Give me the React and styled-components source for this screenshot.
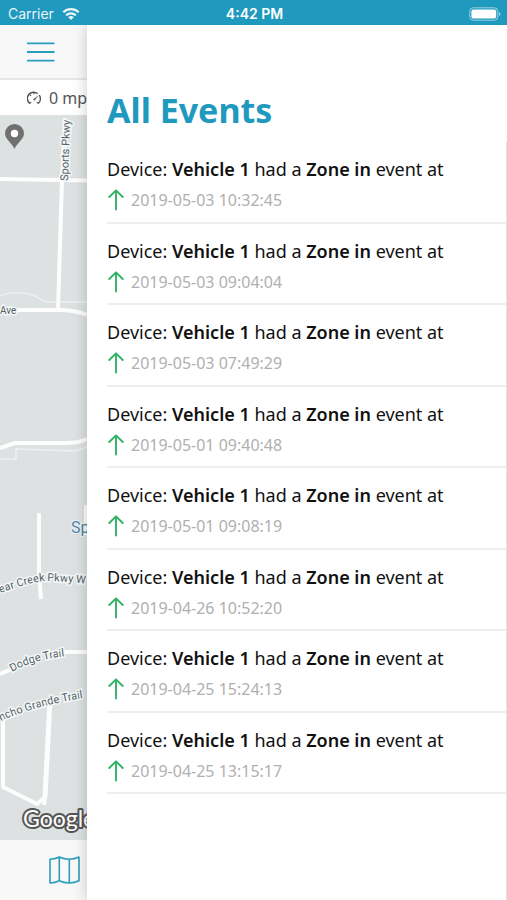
import styled, { createGlobalStyle } from 'styled-components'

const events = [
  { id: 1, device: 'Vehicle 1', type: 'Zone in', time: '2019-05-03 10:32:45' },
  { id: 2, device: 'Vehicle 1', type: 'Zone in', time: '2019-05-03 09:04:04' },
  { id: 3, device: 'Vehicle 1', type: 'Zone in', time: '2019-05-03 07:49:29' },
  { id: 4, device: 'Vehicle 1', type: 'Zone in', time: '2019-05-01 09:40:48' },
  { id: 5, device: 'Vehicle 1', type: 'Zone in', time: '2019-05-01 09:08:19' },
  { id: 6, device: 'Vehicle 1', type: 'Zone in', time: '2019-04-26 10:52:20' },
  { id: 7, device: 'Vehicle 1', type: 'Zone in', time: '2019-04-25 15:24:13' },
  { id: 8, device: 'Vehicle 1', type: 'Zone in', time: '2019-04-25 13:15:17' },
]

const GlobalStyle = createGlobalStyle`
  * {
    box-sizing: border-box;
  }

  body {
    margin: 0;
    background: #fff;
    color: #111;
    font-family: 'Noto Sans', 'Open Sans', sans-serif;
  }
`

const Screen = styled.div`
  display: flex;
  flex-direction: column;
  min-height: 100vh;
`

const StatusBar = styled.header`
  display: grid;
  grid-template-columns: 1fr auto 1fr;
  align-items: center;
  height: 25px;
  padding: 2px 6px 0 8px;
  background: #1f99be;
  color: #fff;
  font-family: Inter, 'Liberation Sans', sans-serif;
  font-size: 14px;
  line-height: 20px;
`

const Carrier = styled.div`
  display: flex;
  align-items: center;
  gap: 8px;
  opacity: 0.9;
`

const Clock = styled.time`
  font-weight: 600;
`

const Battery = styled.svg`
  justify-self: end;
`

const Content = styled.div`
  display: flex;
  flex: 1;
`

const MapPage = styled.section`
  display: flex;
  flex-direction: column;
  flex: 0 0 87px;
  overflow: hidden;
  background: #f8f8f8;
`

const Toolbar = styled.div`
  display: flex;
  align-items: center;
  height: 55px;
  padding-left: 27px;
  border-bottom: 2px solid #e6e6e6;
`

const IconButton = styled.button`
  display: flex;
  padding: 0;
  border: 0;
  background: none;
  color: #2b9dbd;
  cursor: pointer;
`

const SpeedBar = styled.div`
  display: flex;
  align-items: center;
  gap: 8px;
  height: 35px;
  padding-left: 27px;
  background: #fff;
  color: #555;
  font-size: 16px;
  white-space: nowrap;

  svg {
    flex-shrink: 0;
  }
`

const MapView = styled.div`
  flex: 1;
  background: #dde1e2;
  font-family: Roboto, sans-serif;

  svg {
    display: block;
  }
`

const TabBar = styled.nav`
  display: flex;
  align-items: center;
  height: 60px;
  padding-left: 49px;
`

const Drawer = styled.main`
  display: flex;
  flex-direction: column;
  flex: 1;
  min-width: 0;
  padding-left: 20px;
  background: #fff;
  box-shadow: 0 0 14px rgba(0, 0, 0, 0.2);
  clip-path: inset(0 0 0 -20px);
`

const Title = styled.h1`
  margin: 0;
  padding: 61px 0 8px;
  color: #1f99be;
  font-size: 34px;
  font-weight: 700;
  line-height: 48px;
`

const ListArea = styled.div`
  flex: 1;
  border-right: 1px solid #dfe5e7;
`

const EventList = styled.ul`
  display: grid;
  grid-auto-rows: 1fr;
  min-height: 652px;
  margin: 0;
  padding: 0;
  list-style: none;
`

const EventItem = styled.li`
  padding-top: 15px;
  border-bottom: 2px solid #eee;
`

const EventText = styled.p`
  margin: 0;
  font-size: 18px;
  line-height: 24px;

  strong {
    font-weight: 600;
  }
`

const EventMeta = styled.div`
  display: flex;
  align-items: center;
  gap: 6px;
  margin-top: 7px;
  color: #b0b0b0;
  font-size: 16px;
  line-height: 24px;
`

function WifiIcon() {
  return (
    <svg width="18" height="14" viewBox="0 0 18 14" fill="none" stroke="#fff" strokeWidth="2.3">
      <path d="M1.3 5.3a11 11 0 0 1 15.4 0" />
      <path d="M4.2 8.3a7 7 0 0 1 9.6 0" />
      <path d="M9 13 6.2 10.3a4 4 0 0 1 5.6 0Z" fill="#fff" stroke="none" />
    </svg>
  )
}

function BatteryIcon() {
  return (
    <Battery width="32" height="14" viewBox="0 0 32 14">
      <rect x="0.8" y="0.8" width="28" height="12.4" rx="3.4" fill="none" stroke="#fff" strokeOpacity="0.55" />
      <rect x="2.4" y="2.4" width="24.8" height="9.2" rx="2" fill="#fff" />
      <path d="M30 5v4q1.6-.6 1.6-2T30 5Z" fill="#fff" fillOpacity="0.55" />
    </Battery>
  )
}

function MenuIcon() {
  return (
    <svg width="28" height="20" viewBox="0 0 28 20" fill="none" stroke="currentColor" strokeWidth="1.8">
      <path d="M0 1.3h27.5M0 10h27.5M0 18.7h27.5" />
    </svg>
  )
}

function SpeedIcon() {
  return (
    <svg width="14" height="14" viewBox="0 0 14 14" fill="none" stroke="#555" strokeWidth="1.4">
      <path d="M2.7 12.4A6 6 0 0 1 10.6 2.6M12.2 4.2A6 6 0 0 1 11.3 12.4" />
      <path d="m2.4 12.4 1.8-1.1M11.6 12.400 9.800 11.300M7 1.500v1.700M2.700 3.700l1.200 1.200" strokeWidth="1.2" />
      <path d="m6 8.600 5.800-4.500-4.500 5.700Z" fill="#555" stroke="none" />
    </svg>
  )
}

function MapIcon() {
  return (
    <svg width="31" height="28" viewBox="0 0 31 28" fill="none" stroke="currentColor" strokeWidth="1.6" strokeLinejoin="round">
      <path d="M1 3.2q5-.1 9.300-2.200 4.500 2.100 10 2.200 5.200-.1 9.700-2.200v23.800q-4.500 2.100-9.700 2.200-5.500-.1-10-2.200-4.300 2.100-9.300 2.200ZM10.300 1v23.800M20.300 3.200V27" />
    </svg>
  )
}

function ArrowUpIcon() {
  return (
    <svg width="18" height="22" viewBox="0 0 18 22" fill="none" stroke="#2fb266" strokeWidth="1.9" strokeLinecap="round" strokeLinejoin="round">
      <path d="M9 20.5v-19M2.3 8 9 1.3 15.7 8" />
    </svg>
  )
}

function StreetMap() {
  return (
    <svg width="87" height="725" viewBox="0 0 87 725" role="img" aria-label="Map">
      <g fill="none" stroke="#edf0f0" strokeWidth="1.5">
        <path d="M0 181c8-4 24-4 33-1 6 2 10 7 15 7h39" />
        <path d="M0 344h16v-10l60 2 11-4" />
      </g>
      <g fill="none" stroke="#fdfdfd" strokeWidth="4" strokeLinejoin="round">
        <path d="M0 64 87 65.5" />
        <path d="M65 3 62 65 58 195" />
        <path d="M16 195h42c12 0 20 1 29 5" />
        <path d="M0 333 15 328h50c10 0 15-1 22-4" />
        <path d="M39 398v60l2 26" />
        <path d="M0 559 12 554M62 537h25" />
        <path d="M50 585 45 682" strokeWidth="5" />
        <path d="M3 606v66l34 17 8-7-1 8" />
        <path d="M86 390v30" />
      </g>
      <path id="creek" d="M0 478Q34 466 46 466T90 469" fill="none" />
      <path id="dodge" d="M12 557Q34 544 68 541" fill="none" />
      <path id="grande" d="M1 606Q36 590 90 582" fill="none" />
      <g fill="#526267" stroke="#f4f6f6" strokeWidth="3" paintOrder="stroke" fontSize="11">
        <text transform="translate(68 66) rotate(-88)">Sports Pkwy</text>
        <text x="0" y="199" fontSize="10">Ave</text>
        <text><textPath href="#creek">ear Creek Pkwy W</textPath></text>
        <text><textPath href="#dodge">Dodge Trail</textPath></text>
        <text><textPath href="#grande">ncho Grande Trail</textPath></text>
      </g>
      <text x="71" y="418" fontSize="16" fill="#5085a5" stroke="#eef3f6" strokeWidth="2" paintOrder="stroke">Sp</text>
      <path d="M14.5 34C12 28 5 24 5 18.5a9.5 9.5 0 0 1 19 0C24 24 17 28 14.5 34Z" fill="#707070" />
      <circle cx="14.5" cy="18.5" r="3.7" fill="#fff" />
      <text x="23" y="712" fontSize="23" fontFamily="Lato, sans-serif" fill="#fff" stroke="#555" strokeWidth="4" strokeLinejoin="round" paintOrder="stroke">Google</text>
    </svg>
  )
}

function EventPreview({ event }) {
  return (
    <EventItem>
      <EventText>
        Device: <strong>{event.device}</strong> had a <strong>{event.type}</strong> event at
      </EventText>
      <EventMeta>
        <ArrowUpIcon />
        <time>{event.time}</time>
      </EventMeta>
    </EventItem>
  )
}

export default function App() {
  return (
    <Screen>
      <GlobalStyle />
      <StatusBar>
        <Carrier>
          Carrier <WifiIcon />
        </Carrier>
        <Clock>4:42 PM</Clock>
        <BatteryIcon />
      </StatusBar>
      <Content>
        <MapPage>
          <Toolbar>
            <IconButton aria-label="Menu"><MenuIcon /></IconButton>
          </Toolbar>
          <SpeedBar><SpeedIcon /> 0 mph</SpeedBar>
          <MapView><StreetMap /></MapView>
          <TabBar>
            <IconButton aria-label="Map"><MapIcon /></IconButton>
          </TabBar>
        </MapPage>
        <Drawer>
          <Title>All Events</Title>
          <ListArea>
            <EventList>
              {events.map(event => <EventPreview key={event.id} event={event} />)}
            </EventList>
          </ListArea>
        </Drawer>
      </Content>
    </Screen>
  )
}
